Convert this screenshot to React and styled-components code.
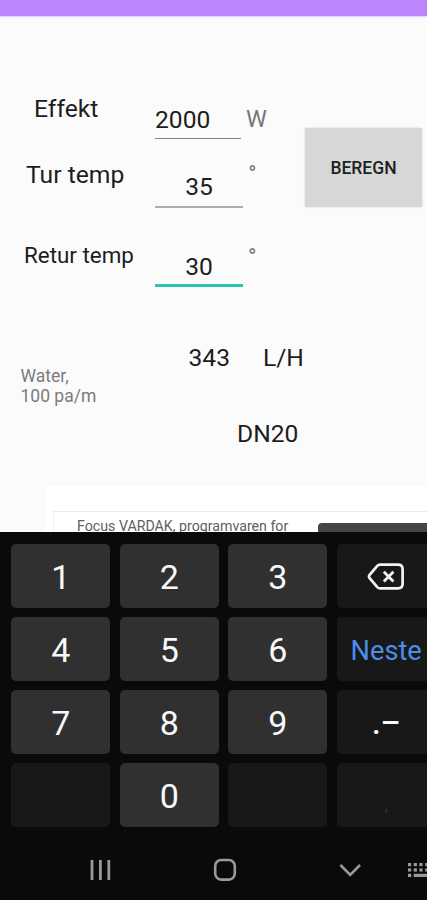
import React from 'react';
import styled, { createGlobalStyle } from 'styled-components';

const Purple = '#bb86fc';
const Teal = '#2ec4b2';
const Blue = '#4a8fea';

const keys = [
  { label: '1' },
  { label: '2' },
  { label: '3' },
  { icon: 'backspace', dim: true },
  { label: '4' },
  { label: '5' },
  { label: '6' },
  { label: 'Neste', kind: 'action', dim: true },
  { label: '7' },
  { label: '8' },
  { label: '9' },
  { label: '.–', kind: 'symbol', dim: true },
  { dim: true },
  { label: '0' },
  { dim: true },
  { label: ',', kind: 'faint', dim: true },
];

const BackspaceIcon = () => (
  <svg width="38" height="30" viewBox="0 0 38 30" fill="none" stroke="#f4f4f4" strokeLinejoin="round">
    <path d="M13 2.6H31Q35.6 2.6 35.6 7.2V21.8Q35.6 26.4 31 26.4H13Q11.5 26.4 10.3 25.1L2.6 16.1Q1.4 14.5 2.6 12.9L10.3 3.9Q11.5 2.6 13 2.6Z" strokeWidth="2.7" />
    <path d="M16.8 9.8L26.4 19.4M26.4 9.8L16.8 19.4" strokeWidth="2.8" />
  </svg>
);

const RecentsIcon = () => (
  <svg width="22" height="22" viewBox="0 0 22 22" fill="none" stroke="#9a9a9a" strokeWidth="2.8">
    <path d="M3 1V21M11.4 1V21M19.8 1V21" />
  </svg>
);

const HomeIcon = () => (
  <svg width="24" height="24" viewBox="0 0 24 24" fill="none" stroke="#9a9a9a" strokeWidth="2.6">
    <rect x="2.2" y="2" width="19.6" height="19.6" rx="6" />
  </svg>
);

const ChevronIcon = () => (
  <svg width="24" height="16" viewBox="0 0 24 16" fill="none" stroke="#9a9a9a" strokeWidth="2.6">
    <path d="M2.4 3L12.2 12.8L22 3" />
  </svg>
);

const KeyboardIcon = () => (
  <svg width="32" height="18" viewBox="0 0 32 18" fill="#9a9a9a">
    {[0, 5.7, 11.4, 17.1, 22.8].map((x) => (
      <React.Fragment key={x}>
        <rect x={x} y="2" width="3.2" height="3.2" />
        <rect x={x} y="7.4" width="3.2" height="3.2" />
      </React.Fragment>
    ))}
    <rect x="0" y="12.8" width="3.2" height="3.2" />
    <rect x="5.7" y="12.8" width="15" height="3.2" />
    <rect x="22.8" y="12.8" width="3.2" height="3.2" />
  </svg>
);

export default () => (
  <Screen>
    <GlobalStyle />
    <Status_Bar />
    <Form>
      <Labels>
        <Label indent={34}>Effekt</Label>
        <Label indent={26} gap={38}>Tur temp</Label>
        <Label indent={24} gap={52} size={22.4}>Retur temp</Label>
      </Labels>
      <Fields>
        <Field width={86} height={35} line={1.5} color="#858585" align="left">2000</Field>
        <Field width={88} height={36.5} line={2} color="#adadad" gap={32}>35</Field>
        <Field width={88} height={36} line={3} color={Teal} gap={43.5}>30</Field>
      </Fields>
      <Units>
        <Unit>W</Unit>
        <Degree gap={28}>°</Degree>
        <Degree gap={55}>°</Degree>
      </Units>
      <Button>BEREGN</Button>
    </Form>
    <Results>
      <Note>
        Water,
        <br />
        100 pa/m
      </Note>
      <Values>
        <Flow>
          <Value>343</Value>
          <Value>L/H</Value>
        </Flow>
        <Dimension>DN20</Dimension>
      </Values>
    </Results>
    <Ad>
      <Ad_Card>
        <Ad_Text>Focus VARDAK, programvaren for</Ad_Text>
        <Ad_Button />
      </Ad_Card>
    </Ad>
    <Keyboard>
      {keys.map(({ label, icon, kind, dim }, i) => (
        <Key key={i} $dim={dim} $kind={kind}>
          {icon ? <BackspaceIcon /> : label}
        </Key>
      ))}
    </Keyboard>
    <Nav_Bar>
      <RecentsIcon />
      <HomeIcon />
      <ChevronIcon />
      <KeyboardIcon />
    </Nav_Bar>
  </Screen>
);

const GlobalStyle = createGlobalStyle`
  body {
    margin: 0;
    overflow: hidden;
  }
  * {
    box-sizing: border-box;
  }
`;

const keepChildren = { shouldForwardProp: (prop) => prop === 'children' };

const Screen = styled.div`
  display: flex;
  flex-direction: column;
  width: 427px;
  height: 900px;
  overflow: hidden;
  background: #fbfbfb;
  color: #1d1d1d;
  font-family: Roboto, sans-serif;
  font-size: 24.6px;
`;
const Status_Bar = styled.div`
  flex: none;
  height: 16px;
  background: ${Purple};
  box-shadow: 0 0 2px ${Purple};
`;
const Form = styled.div`
  display: flex;
  flex: none;
  height: 304px;
  padding-top: 79px;
`;
const Labels = styled.div`
  width: 155px;
`;
const Label = styled.div.withConfig(keepChildren)`
  height: 28px;
  margin-top: ${({ gap = 0 }) => gap}px;
  padding-left: ${({ indent }) => indent}px;
  font-size: ${({ size = 24.7 }) => size}px;
  line-height: 28px;
  white-space: nowrap;
`;
const Fields = styled.div`
  width: 88px;
  padding-top: 9px;
`;
const Field = styled.div.withConfig(keepChildren)`
  width: ${({ width }) => width}px;
  height: ${({ height }) => height}px;
  margin-top: ${({ gap = 0 }) => gap}px;
  border-bottom: ${({ line }) => line}px solid ${({ color }) => color};
  line-height: 32px;
  text-align: ${({ align = 'center' }) => align};
`;
const Units = styled.div`
  width: 62px;
  padding: 10px 0 0 3px;
  color: #777;
`;
const Unit = styled.div`
  height: 28px;
  font-size: 23.5px;
  line-height: 28px;
`;
const Degree = styled.div.withConfig(keepChildren)`
  height: 28px;
  margin-top: ${({ gap }) => gap}px;
  padding-left: 2px;
  font-size: 23px;
  line-height: 28px;
`;
const Button = styled.button`
  width: 117px;
  height: 79px;
  margin-top: 33px;
  padding: 0;
  border: 0;
  border-radius: 2px;
  background: #d6d8d7;
  box-shadow: 0 0 2px #c4c6c5;
  color: #1f1f1f;
  font-family: inherit;
  font-size: 17.5px;
  font-weight: 500;
`;
const Results = styled.div`
  display: flex;
  flex: none;
  height: 166px;
  padding-top: 24px;
`;
const Note = styled.div`
  width: 188.5px;
  padding: 21.5px 0 0 20.5px;
  color: #7b7b7b;
  font-size: 17.5px;
  line-height: 20px;
`;
const Values = styled.div`
  display: flex;
  flex-direction: column;
  gap: 48px;
`;
const Flow = styled.div`
  display: flex;
  gap: 33px;
`;
const Value = styled.div`
  line-height: 28px;
`;
const Dimension = styled.div`
  padding-left: 48.5px;
  line-height: 28px;
`;
const Ad = styled.div`
  flex: none;
  height: 46px;
  margin-left: 45px;
  padding: 25px 0 0 8px;
  background: #fff;
`;
const Ad_Card = styled.div`
  display: flex;
  height: 21px;
  padding-left: 23px;
  overflow: hidden;
  border-top: 1.5px solid #ececec;
  border-left: 1px solid #f0f0f0;
`;
const Ad_Text = styled.div`
  width: 241px;
  color: #606060;
  font-size: 14.2px;
  line-height: 29px;
  white-space: nowrap;
`;
const Ad_Button = styled.div`
  flex: 1;
  height: 20px;
  margin-top: 11px;
  border-radius: 4px 0 0 0;
  background: #454545;
`;
const Keyboard = styled.div`
  display: grid;
  flex: none;
  grid-template-columns: repeat(4, 99px);
  grid-auto-rows: 64px;
  gap: 9px 9.5px;
  height: 303px;
  padding: 12px 0 0 11.2px;
  background: #0a0a0a;
`;

const keyFont = {
  action: '27.2px',
  symbol: '31px',
  faint: '18px',
};
const keyColor = {
  action: Blue,
  faint: '#353535',
};
const keyPadding = {
  action: '3px',
  symbol: '3px',
  faint: '18px',
};

const Key = styled.div`
  display: flex;
  align-items: center;
  justify-content: center;
  padding-top: ${({ $kind }) => keyPadding[$kind] || '2px'};
  border-radius: 5px;
  background: ${({ $dim }) => ($dim ? '#181818' : '#303030')};
  color: ${({ $kind }) => keyColor[$kind] || '#f8f8f8'};
  font-size: ${({ $kind }) => keyFont[$kind] || '34px'};
  font-weight: ${({ $kind }) => ($kind === 'symbol' ? 500 : 400)};
`;
const Nav_Bar = styled.div`
  display: grid;
  flex: 1;
  grid-template-columns: 124px 125px 70px 32px;
  align-items: center;
  padding: 5px 0 0 89px;
  background: #0a0a0a;
`;
